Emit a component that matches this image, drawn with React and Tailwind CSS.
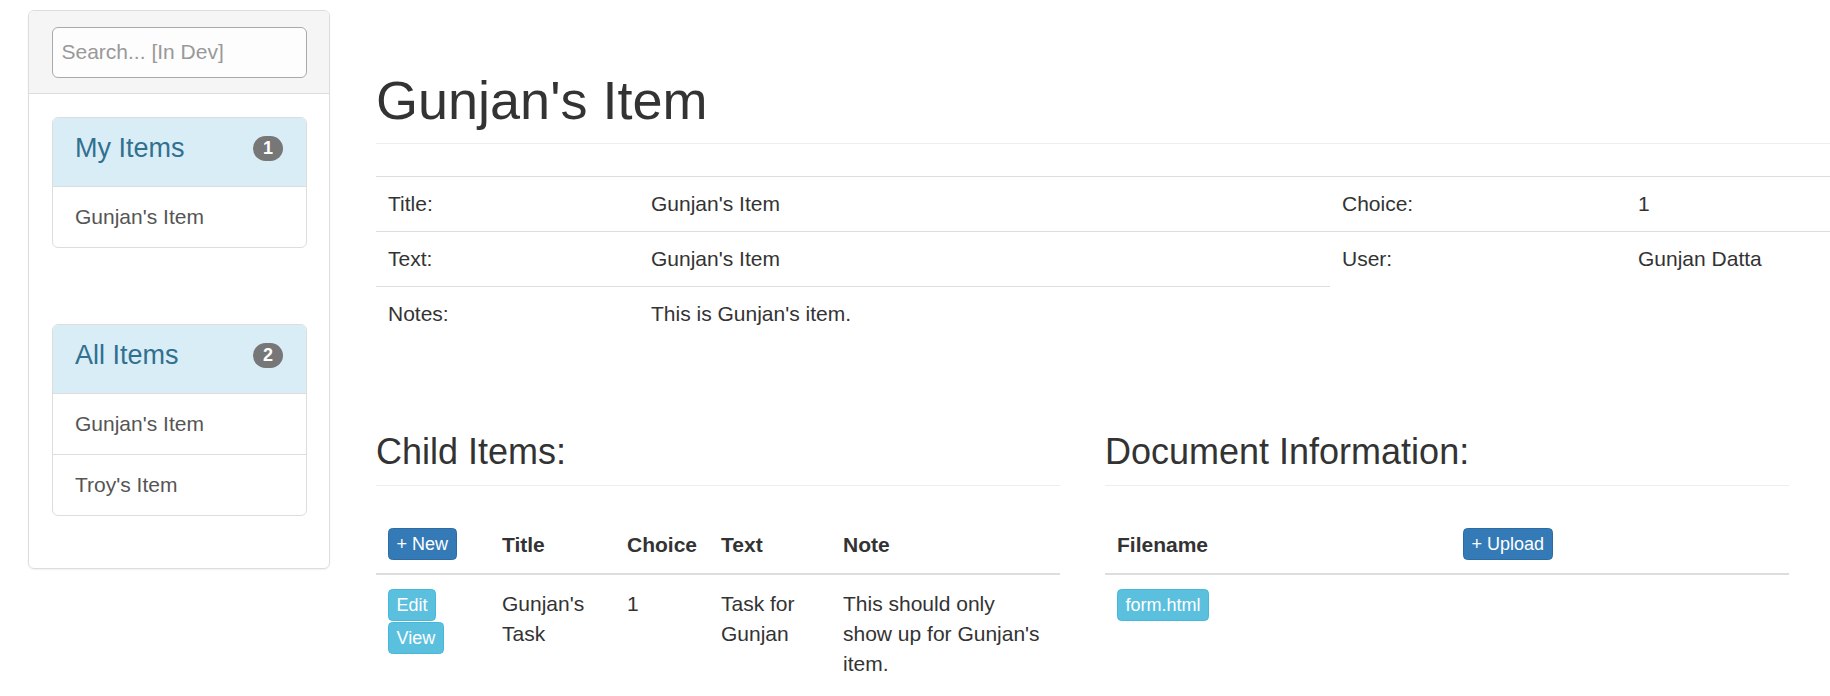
import React from 'react';

const sidebarGroups = [
  { title: 'My Items', count: 1, items: ["Gunjan's Item"] },
  { title: 'All Items', count: 2, items: ["Gunjan's Item", "Troy's Item"] },
];

const leftDetails = [
  ['Title:', "Gunjan's Item"],
  ['Text:', "Gunjan's Item"],
  ['Notes:', "This is Gunjan's item."],
];

const rightDetails = [
  ['Choice:', '1'],
  ['User:', 'Gunjan Datta'],
];

const XsButton = ({ children, variant = 'primary', className = '' }) => {
  const colors =
    variant === 'primary'
      ? 'bg-[#337ab7] border-[#2e6da4]'
      : 'bg-[#5bc0de] border-[#46b8da]';
  return (
    <button
      className={`inline-flex h-[32px] items-center px-[7.5px] text-[18px] font-normal leading-[27px] text-white border rounded-[4.5px] ${colors} ${className}`}
    >
      {children}
    </button>
  );
};

const SidebarGroup = ({ group, className = '' }) => (
  <div className={`border border-[#ddd] rounded-[6px] overflow-hidden ${className}`}>
    <div className="bg-[#d9edf7] border-b border-[#ddd] pt-[15px] pb-[23px] px-[22.5px] flex items-center justify-between">
      <span className="text-[27px] leading-[30px] text-[#31708f]">{group.title}</span>
      <span className="h-[25px] w-[30px] rounded-[15px] bg-[#777] text-white text-[18px] font-bold leading-none flex items-center justify-center">
        {group.count}
      </span>
    </div>
    {group.items.map((item, i) => (
      <div
        key={item}
        className={`px-[22.5px] py-[15px] text-[#555] ${i > 0 ? 'border-t border-[#ddd]' : ''}`}
      >
        {item}
      </div>
    ))}
  </div>
);

const DetailTable = ({ rows, labelWidth }) => (
  <table className="w-[954px] shrink-0 border-collapse table-fixed">
    <tbody>
      {rows.map(([label, value]) => (
        <tr key={label}>
          <td className={`${labelWidth} border-t border-[#ddd] p-[12px] align-top`}>{label}</td>
          <td className="border-t border-[#ddd] p-[12px] align-top">{value}</td>
        </tr>
      ))}
    </tbody>
  </table>
);

const SectionHeading = ({ children }) => (
  <h3 className="text-[36px] leading-[39.6px] pb-[13.5px] border-b border-[#eee] font-normal">
    {children}
  </h3>
);

const thBase = 'text-left font-bold align-bottom px-[12px] pt-[12px] pb-[13px] border-b-2 border-[#ddd]';
const tdBase = 'align-top px-[12px] pt-[14px] pb-[12px]';

export default function App() {
  return (
    <div className="w-[1830px] h-[696px] overflow-hidden bg-white flex items-start font-['Liberation_Sans',Arial,sans-serif] text-[21px] leading-[30px] text-[#333]">
      {/* Sidebar */}
      <div className="ml-[28px] mt-[10px] w-[302px] shrink-0 border border-[#ddd] rounded-[6px] shadow-[0_1px_2px_rgba(0,0,0,0.06)]">
        <div className="bg-[#f5f5f5] border-b border-[#ddd] px-[22.5px] py-[15.5px] rounded-t-[5px]">
          <input
            className="h-[51px] w-full border border-[#aaa] rounded-[6px] px-[9px] bg-[#fdfdfd] text-[21px] outline-none placeholder:text-[#999]"
            placeholder="Search... [In Dev]"
          />
        </div>
        <div className="px-[22.5px] pt-[23px] pb-[52px]">
          <SidebarGroup group={sidebarGroups[0]} className="mb-[76px]" />
          <SidebarGroup group={sidebarGroups[1]} />
        </div>
      </div>

      {/* Main */}
      <div className="ml-[46px] mt-[71px] shrink-0 flex flex-col">
        <h1 className="w-[1908px] text-[54px] leading-[59px] pb-[13px] border-b border-[#eee] font-normal">
          Gunjan's Item
        </h1>

        <div className="mt-[32px] flex items-start w-[1908px]">
          <DetailTable rows={leftDetails} labelWidth="w-[263px]" />
          <DetailTable rows={rightDetails} labelWidth="w-[296px]" />
        </div>

        <div className="mt-[91px] w-[1413px] grid grid-cols-2 gap-[45px]">
          <div>
            <SectionHeading>Child Items:</SectionHeading>
            <table className="mt-[30px] w-full border-collapse table-fixed">
              <thead>
                <tr>
                  <th className={`${thBase} w-[114px]`}>
                    <div className="flex">
                      <XsButton>+ New</XsButton>
                    </div>
                  </th>
                  <th className={`${thBase} w-[125px]`}>Title</th>
                  <th className={`${thBase} w-[94px]`}>Choice</th>
                  <th className={`${thBase} w-[122px]`}>Text</th>
                  <th className={thBase}>Note</th>
                </tr>
              </thead>
              <tbody>
                <tr>
                  <td className={tdBase}>
                    <div className="flex flex-col items-start gap-[1px]">
                      <XsButton variant="info">Edit</XsButton>
                      <XsButton variant="info">View</XsButton>
                    </div>
                  </td>
                  <td className={tdBase}>Gunjan's Task</td>
                  <td className={tdBase}>1</td>
                  <td className={tdBase}>Task for Gunjan</td>
                  <td className={tdBase}>This should only show up for Gunjan's item.</td>
                </tr>
              </tbody>
            </table>
          </div>

          <div>
            <SectionHeading>Document Information:</SectionHeading>
            <table className="mt-[30px] w-full border-collapse table-fixed">
              <thead>
                <tr>
                  <th className={`${thBase} w-[346px]`}>Filename</th>
                  <th className={thBase}>
                    <div className="flex">
                      <XsButton>+ Upload</XsButton>
                    </div>
                  </th>
                </tr>
              </thead>
              <tbody>
                <tr>
                  <td className={tdBase}>
                    <div className="flex">
                      <XsButton variant="info">form.html</XsButton>
                    </div>
                  </td>
                  <td className={tdBase}></td>
                </tr>
              </tbody>
            </table>
          </div>
        </div>
      </div>
    </div>
  );
}
